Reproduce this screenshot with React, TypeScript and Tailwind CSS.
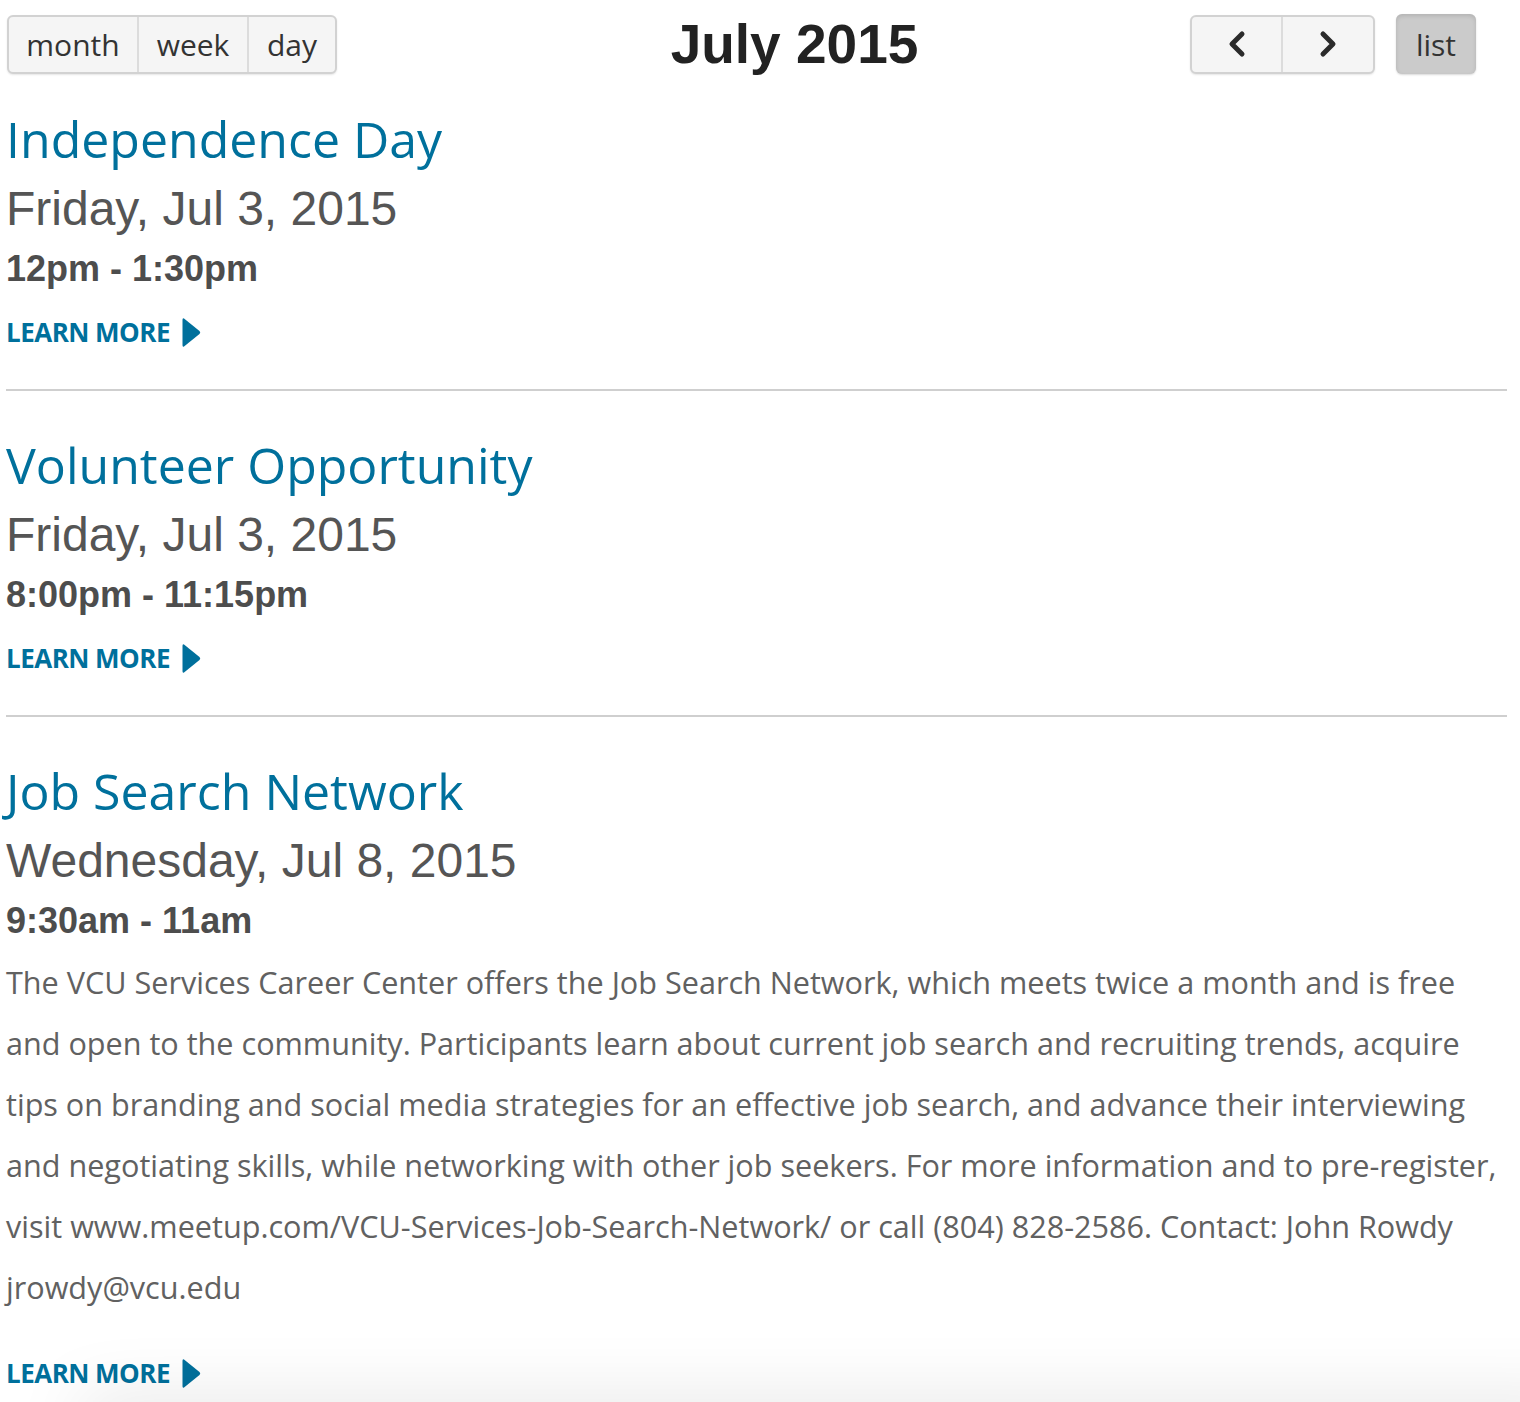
import React from "react";

type CalEvent = {
  title: string;
  date: string;
  time: string;
  description?: string;
};

const EVENTS: CalEvent[] = [
  { title: "Independence Day", date: "Friday, Jul 3, 2015", time: "12pm - 1:30pm" },
  { title: "Volunteer Opportunity", date: "Friday, Jul 3, 2015", time: "8:00pm - 11:15pm" },
  {
    title: "Job Search Network",
    date: "Wednesday, Jul 8, 2015",
    time: "9:30am - 11am",
    description:
      "The VCU Services Career Center offers the Job Search Network, which meets twice a month and is free and open to the community. Participants learn about current job search and recruiting trends, acquire tips on branding and social media strategies for an effective job search, and advance their interviewing and negotiating skills, while networking with other job seekers. For more information and to pre-register, visit www.meetup.com/VCU-Services-Job-Search-Network/ or call (804) 828-2586. Contact: John Rowdy jrowdy@vcu.edu",
  },
];

const myriad = "font-['Open_Sans',sans-serif]";
const helv = "font-['Liberation_Sans',Arial,sans-serif]";

const Chevron = ({ dir }: { dir: "left" | "right" }) => (
  <svg width="22" height="28" viewBox="0 0 22 28" fill="none">
    <polyline
      points={dir === "left" ? "16,4 6,14 16,24" : "6,4 16,14 6,24"}
      stroke="#2b2b2b"
      strokeWidth="5"
      strokeLinecap="round"
      strokeLinejoin="round"
    />
  </svg>
);

const LearnMore = () => (
  <a className={`flex items-center gap-[12px] h-[76px] text-[#00709c] ${myriad}`} href="#">
    <span className="text-[26px] font-bold tracking-[-0.02em] uppercase">Learn More</span>
    <svg width="19" height="31" viewBox="0 0 19 31">
      <path d="M2 1.5 Q0.5 0.5 0.5 3 L0.5 28 Q0.5 30.5 2 29.5 L17.5 17 Q19 15.5 17.5 14 Z" fill="#00709c" />
    </svg>
  </a>
);

const EventItem = ({ ev }: { ev: CalEvent }) => (
  <div>
    <h2 className={`text-[50px] leading-[70px] text-[#00709c] ${myriad}`}>{ev.title}</h2>
    <div className={`text-[48px] leading-[70px] text-[#555] ${helv}`}>{ev.date}</div>
    <div className={`text-[36px] leading-[50px] font-bold text-[#4d4d4d] ${helv}`}>{ev.time}</div>
    {ev.description && (
      <p className={`mt-[6px] w-[1505px] text-[30.6px] leading-[61px] text-[#616161] ${myriad}`}>
        {ev.description}
      </p>
    )}
    <div className={ev.description ? "mt-[17px]" : ""}>
      <LearnMore />
    </div>
  </div>
);

export default function App() {
  return (
    <div className="relative h-[1402px] overflow-hidden bg-white">
      {/* toolbar */}
      <div className="grid grid-cols-[auto_1fr_auto] items-center pt-[14px] pl-[7px] pr-[44px]">
        <div className={`flex h-[59px] rounded-[6px] border-2 border-[#d2d2d2] bg-[#f5f5f5] text-[30px] text-[#333] shadow-[0_1px_2px_rgba(0,0,0,0.1)] ${myriad}`}>
          <button className="w-[130px] border-r-2 border-[#dcdcdc]">month</button>
          <button className="w-[110px] border-r-2 border-[#dcdcdc]">week</button>
          <button className="w-[86px]">day</button>
        </div>
        <h1 className={`pl-[62px] text-center text-[55px] leading-[59px] font-bold text-[#222] ${helv}`}>July 2015</h1>
        <div className="flex items-center gap-[21px]">
          <div className="flex h-[59px] rounded-[6px] border-2 border-[#d2d2d2] bg-[#f5f5f5] shadow-[0_1px_2px_rgba(0,0,0,0.1)]">
            <button className="flex w-[91px] items-center justify-center border-r-2 border-[#dcdcdc]">
              <Chevron dir="left" />
            </button>
            <button className="flex w-[90px] items-center justify-center">
              <Chevron dir="right" />
            </button>
          </div>
          <button className={`h-[60px] w-[80px] rounded-[6px] bg-[#cbcbcb] text-[30px] text-[#333] shadow-[inset_0_2px_4px_rgba(0,0,0,0.12),0_1px_2px_rgba(0,0,0,0.15)] ${myriad}`}>
            list
          </button>
        </div>
      </div>

      {/* event list */}
      <div className="mt-[30px] w-[1507px] pl-[6px]">
        {EVENTS.map((ev, i) => (
          <div key={ev.title}>
            {i > 0 && <div className="mt-[19px] mb-[39px] h-[2px] bg-[#cfcfcf]" />}
            <EventItem ev={ev} />
          </div>
        ))}
      </div>

      {/* footer shadow */}
      <div className="pointer-events-none absolute -bottom-[40px] left-[80px] -right-[60px] h-[40px] bg-white shadow-[0_0_70px_rgba(0,0,0,0.13)]" />
    </div>
  );
}
